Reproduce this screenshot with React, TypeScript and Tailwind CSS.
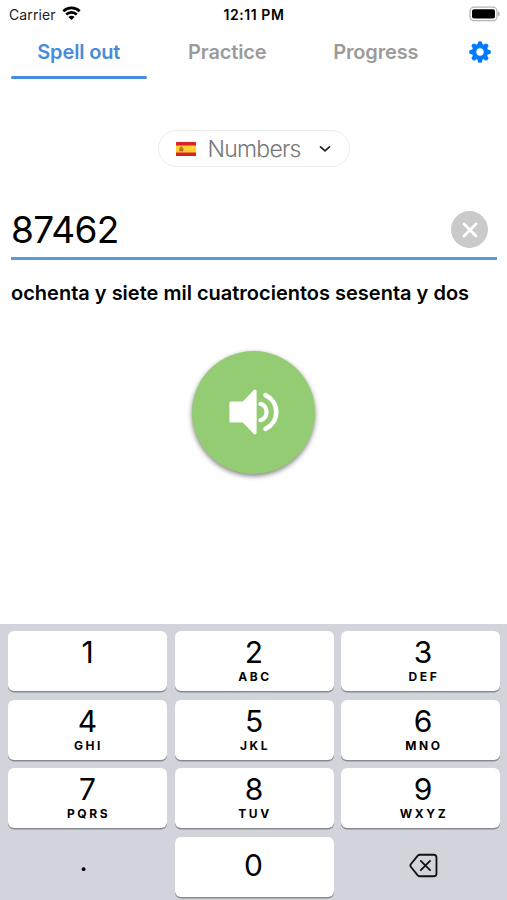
import React, { useState } from 'react';
import clsx from 'clsx';

interface Key {
  digit: string;
  letters?: string;
}

const KEYS: Key[] = [
  { digit: '1' },
  { digit: '2', letters: 'ABC' },
  { digit: '3', letters: 'DEF' },
  { digit: '4', letters: 'GHI' },
  { digit: '5', letters: 'JKL' },
  { digit: '6', letters: 'MNO' },
  { digit: '7', letters: 'PQRS' },
  { digit: '8', letters: 'TUV' },
  { digit: '9', letters: 'WXYZ' },
];

const TABS = ['Spell out', 'Practice', 'Progress'];

const StatusBar: React.FC = () => (
  <div className="grid h-7 grid-cols-3 items-center pl-[9px] pr-[7px] text-black">
    <div className="flex items-center gap-[6px]">
      <span className="text-[14px] tracking-[0.1px] text-[#222]">Carrier</span>
      <svg className="-mt-[2px]" width="19" height="14" viewBox="0 0 19 14" fill="none" stroke="#000" strokeWidth="2.6">
        <path d="M1.3 5.2a11.7 11.7 0 0 1 16.4 0" />
        <path d="M4.2 8.5a7.6 7.6 0 0 1 10.6 0" />
        <path d="M9.5 14 6.4 11a4.4 4.4 0 0 1 6.2 0z" fill="#000" stroke="none" />
      </svg>
    </div>
    <span className="-ml-[1px] text-center text-[14px] font-semibold tracking-[0.55px] whitespace-nowrap">12:11 PM</span>
    <svg className="-mt-[1px] justify-self-end" width="31" height="16" viewBox="0 0 31 16">
      <rect x="1" y="1.2" width="27" height="13.4" rx="4" fill="#fff" stroke="#b5b5b5" strokeWidth="1.3" />
      <rect x="3" y="3.2" width="23" height="9.4" rx="2" fill="#000" />
      <path d="M29.2 5.4v5c1-.4 1.6-1.4 1.6-2.5s-.6-2.1-1.6-2.5z" fill="#a8a8a8" />
    </svg>
  </div>
);

const GearIcon: React.FC = () => (
  <svg width="22" height="22" viewBox="-11 -11 22 22" fill="#007aff">
    <g>
      {[0, 45, 90, 135].map((angle) => (
        <rect key={angle} x="-2.3" y="-10.8" width="4.6" height="21.6" rx="1.9" transform={`rotate(${angle})`} />
      ))}
      <circle r="8.2" />
    </g>
    <circle r="3.7" fill="#fff" />
  </svg>
);

const SpainFlag: React.FC = () => (
  <svg width="20" height="14" viewBox="0 0 20 14">
    <rect width="20" height="14" rx="0.6" fill="#d8232a" />
    <rect y="3.5" width="20" height="7" fill="#ffd02f" />
    <path d="M3.2 6.2h4.2v2.3q0 1-2.1 1-2.1 0-2.1-1z" fill="#c8622c" />
    <path d="M3.9 5.7 4.4 4.8h1.8l.5.9z" fill="#b8442a" />
  </svg>
);

const App: React.FC = () => {
  const [tab, setTab] = useState('Spell out');
  const [value, setValue] = useState('87462');

  return (
    <div className="flex h-[900px] w-[507px] flex-col overflow-hidden bg-white font-['Inter',sans-serif] text-black">
      <StatusBar />

      <nav className="flex h-[51px] pl-[11px]">
        {TABS.map((name) => (
          <button
            key={name}
            onClick={() => setTab(name)}
            className={clsx(
              'mr-[13px] flex w-[135.5px] flex-col items-center justify-between text-[20px] font-semibold whitespace-nowrap',
              tab === name ? 'text-[#478cdb]' : 'text-[#9b9b9b]'
            )}
          >
            <span className="mt-[9px] leading-[30px] tracking-[-0.15px]">{name}</span>
            <span className={clsx('h-[3.5px] w-full rounded-full', tab === name && 'bg-[#478cdb]')} />
          </button>
        ))}
        <button className="mt-[13px] ml-[12px] h-[22px]">
          <GearIcon />
        </button>
      </nav>

      <button className="mt-[51px] flex h-[37px] w-[192px] items-center self-center rounded-full border border-[#ececec] pl-[17px]">
        <SpainFlag />
        <span className="mt-[2px] ml-[12px] w-[98px] text-left text-[23px] font-light tracking-[-0.75px] text-[#777]">
          Numbers
        </span>
        <svg className="ml-[13px]" width="12" height="8" viewBox="0 0 12 8" fill="none" stroke="#222" strokeWidth="1.7">
          <path d="m1.5 1.8 4.5 4 4.5-4" strokeLinecap="round" strokeLinejoin="round" />
        </svg>
      </button>

      <div className="mt-[36px] mr-[10px] ml-[11px] flex h-[57px] items-start justify-between border-b-[3px] border-[#5b98df]">
        <span className="text-[37px] leading-[54px] tracking-[-0.7px]">{value}</span>
        <button
          onClick={() => setValue('')}
          className="mt-[8px] mr-[9px] flex h-[37px] w-[37px] items-center justify-center rounded-full bg-[#cacaca]"
        >
          <svg width="16" height="16" viewBox="0 0 16 16" stroke="#fff" strokeWidth="2.8" strokeLinecap="round">
            <path d="m2 2 12 12M14 2 2 14" />
          </svg>
        </button>
      </div>

      <p className="mt-[18px] ml-[11px] text-[20px] leading-[30px] font-semibold whitespace-nowrap">
        ochenta y siete mil cuatrocientos sesenta y dos
      </p>

      <button className="mt-[43px] flex h-[123px] w-[123px] items-center justify-center self-center rounded-full bg-[#93cc73] shadow-[0_2px_5px_rgba(0,0,0,0.5)]">
        <svg className="-mt-[2px]" width="50" height="46" viewBox="0 0 50 46" fill="none" stroke="#fff">
          <path
            d="M2 14h12.5L26 2.2v41.6L14.5 32H2z"
            fill="#fff"
            strokeWidth="3.2"
            strokeLinejoin="round"
          />
          <path d="M31.5 14.8a8.6 8.6 0 0 1 0 16.4" strokeWidth="4.2" strokeLinecap="round" />
          <path d="M36.5 6.2a18.5 18.5 0 0 1 0 33.6" strokeWidth="4.6" strokeLinecap="round" />
        </svg>
      </button>

      <div className="mt-auto grid h-[276px] grid-cols-3 grid-rows-[repeat(4,60px)] gap-x-[7.5px] gap-y-[8.5px] bg-[#d1d4db] pt-[7px] pr-[7px] pl-[8px]">
        {KEYS.map(({ digit, letters }, i) => (
          <button
            key={digit}
            onClick={() => setValue(value + digit)}
            className={clsx(
              'flex flex-col items-center rounded-[6px] bg-white shadow-[0_1.5px_0_#898a8d]',
              i % 3 === 2 && 'pl-[5px]'
            )}
          >
            <span className="mt-[4px] text-[30px] leading-[35px]">{digit}</span>
            {letters && (
              <span className="pl-[2px] text-[12px] leading-[14px] font-bold tracking-[2.6px]">{letters}</span>
            )}
          </button>
        ))}
        <button className="flex justify-center pr-[8px] text-[28px] leading-[48px]">.</button>
        <button
          onClick={() => setValue(value + '0')}
          className="rounded-[6px] bg-white pr-[1px] pb-[2px] text-[30px] shadow-[0_1.5px_0_#898a8d]"
        >
          0
        </button>
        <button
          onClick={() => setValue(value.slice(0, -1))}
          className="flex items-center justify-center pb-[3px] pl-[5px]"
        >
          <svg width="29" height="25" viewBox="0 0 30 26" fill="none" stroke="#111" strokeWidth="1.9">
            <path
              d="M11.2 1.8h14.3q3 0 3 3v16.4q0 3-3 3H11.2q-1.3 0-2.2-1L2 14.6q-1.3-1.6 0-3.2L9 2.8q.9-1 2.2-1z"
              strokeLinejoin="round"
            />
            <path d="m12.2 8.2 9.6 9.6M21.8 8.2l-9.6 9.6" strokeLinecap="round" />
          </svg>
        </button>
      </div>
    </div>
  );
};

export default App;
